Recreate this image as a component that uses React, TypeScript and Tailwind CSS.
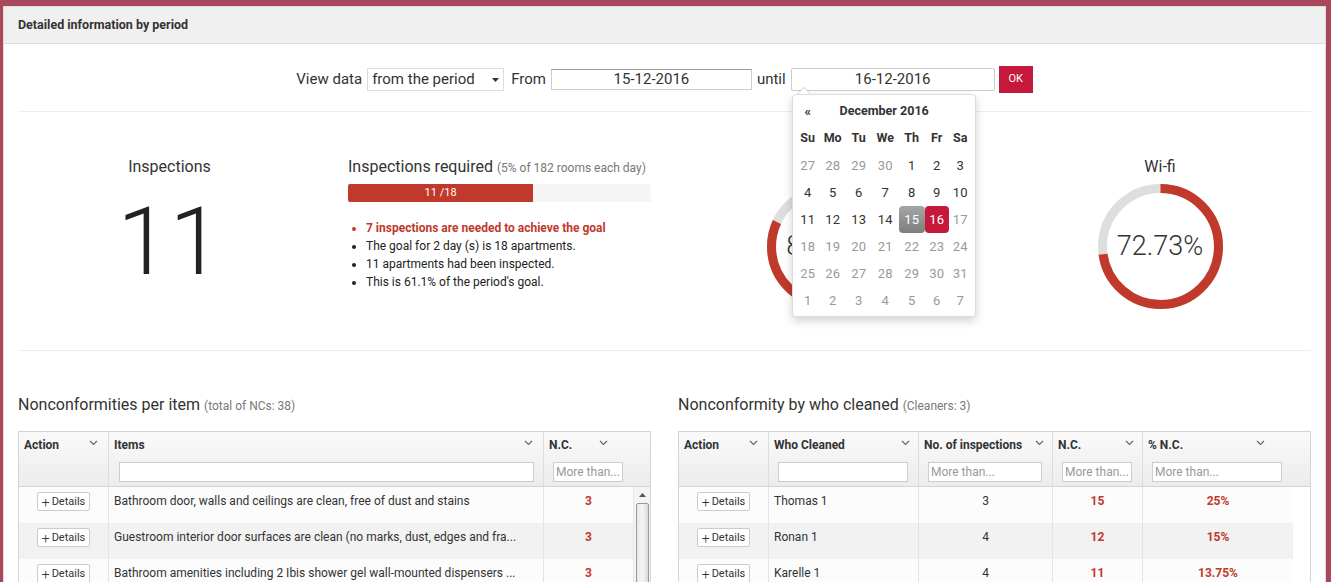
import React from "react"

const RED = "#c0392b"

const Chevron = () => (
  <svg width="9" height="6" viewBox="0 0 9 6" className="shrink-0">
    <path d="M1 1l3.5 3.5L8 1" fill="none" stroke="#666" strokeWidth="1.2" />
  </svg>
)

const Donut = ({ pct, label }: { pct: number; label: string }) => {
  const r = 58
  const c = 2 * Math.PI * r
  return (
    <div className="relative w-[125px] h-[125px]">
      <svg width="125" height="125" viewBox="0 0 125 125">
        <circle cx="62.5" cy="62.5" r={r} fill="none" stroke="#dedede" strokeWidth="9" />
        <circle
          cx="62.5"
          cy="62.5"
          r={r}
          fill="none"
          stroke={RED}
          strokeWidth="9"
          strokeDasharray={`${(c * pct) / 100} ${c}`}
          transform="rotate(-90 62.5 62.5)"
        />
      </svg>
      <div className="absolute inset-0 flex items-center justify-center text-[27px] font-light text-[#333]">
        {label}
      </div>
    </div>
  )
}

const DetailsButton = () => (
  <button className="h-[19px] w-[53px] bg-white border border-[#ccc] rounded-[2px] text-[11px] text-[#333] flex items-center justify-center gap-[2px] leading-none">
    <span className="text-[14px] font-light">+</span>Details
  </button>
)

const FilterInput = ({ placeholder, w }: { placeholder?: string; w: string }) => (
  <div
    className={`${w} h-[20px] bg-white border border-[#ccc] text-[12px] text-[#999] px-[2px] flex items-center overflow-hidden whitespace-nowrap`}
  >
    {placeholder}
  </div>
)

const items = [
  "Bathroom door, walls and ceilings are clean, free of dust and stains",
  "Guestroom interior door surfaces are clean (no marks, dust, edges and fra...",
  "Bathroom amenities including 2 Ibis shower gel wall-mounted dispensers ...",
]

const cleaners = [
  { name: "Thomas 1", insp: 3, nc: 15, pct: "25%" },
  { name: "Ronan 1", insp: 4, nc: 12, pct: "15%" },
  { name: "Karelle 1", insp: 4, nc: 11, pct: "13.75%" },
]

const calRows = [
  [27, 28, 29, 30, 1, 2, 3],
  [4, 5, 6, 7, 8, 9, 10],
  [11, 12, 13, 14, 15, 16, 17],
  [18, 19, 20, 21, 22, 23, 24],
  [25, 26, 27, 28, 29, 30, 31],
  [1, 2, 3, 4, 5, 6, 7],
]

const Calendar = () => (
  <div className="absolute left-[1px] top-[26px] z-10">
    {/* arrow */}
    <div className="absolute left-[5px] top-[-7px] w-0 h-0 border-x-[7px] border-x-transparent border-b-[7px] border-b-[#ccc]" />
    <div className="absolute left-[6px] top-[-6px] w-0 h-0 border-x-[6px] border-x-transparent border-b-[6px] border-b-white" />
    <div className="w-[184px] bg-white border border-[#ddd] rounded-[4px] shadow-[0_4px_10px_rgba(0,0,0,0.18)] pt-[3px] pb-[2px] pl-[3px] pr-[2px] text-[#333]">
      <div className="grid grid-cols-[24px_26px_26px_27px_26px_24px_23px]">
        <div className="h-[27px] flex items-center justify-center text-[13px] font-bold">«</div>
        <div className="col-span-5 h-[27px] flex items-center justify-center text-[12.5px] font-bold">December 2016</div>
        <div />
        {["Su", "Mo", "Tu", "We", "Th", "Fr", "Sa"].map((d) => (
          <div key={d} className="h-[27px] flex items-center justify-center text-[12.5px] font-bold">
            {d}
          </div>
        ))}
        {calRows.map((row, ri) =>
          row.map((d, ci) => {
            const muted = ri === 0 ? ci < 4 : ri >= 3 || (ri === 2 && ci === 6)
            const sel15 = ri === 2 && ci === 4
            const sel16 = ri === 2 && ci === 5
            let cls = "text-[#333]"
            if (muted) cls = "text-[#999]"
            if (sel15) cls = "text-white bg-gradient-to-b from-[#a6a6a6] to-[#7e7e7e] rounded-[4px]"
            if (sel16) cls = "text-white bg-[#c5183a] rounded-[4px]"
            return (
              <div key={`${ri}-${ci}`} className={`h-[27px] flex items-center justify-center text-[13px] ${cls}`}>
                {d}
              </div>
            )
          })
        )}
      </div>
    </div>
  </div>
)

export default function App() {
  return (
    <div className="w-[1331px] h-[582px] overflow-hidden bg-[#a9485a] pl-[3px] pr-[5px] pt-[6px] font-['Roboto',sans-serif] text-[#333]">
      <div className="bg-white border border-[#dcdcdc] h-[600px]">
        {/* Panel header */}
        <div className="h-[37px] bg-[#f0f0f0] border-b border-[#dcdcdc] px-[14px] flex items-center text-[12.5px] font-bold text-[#333]">
          Detailed information by period
        </div>

        <div className="px-[14px]">
          {/* Filter row */}
          <div className="mt-[22px] flex items-center justify-center text-[15px]">
            <span>View data</span>
            <div className="ml-[5px] w-[137px] h-[23px] border border-[#ddd] bg-white flex items-center justify-between px-[4px]">
              <span>from the period</span>
              <svg width="7" height="4" viewBox="0 0 7 4">
                <path d="M0 0h7L3.5 4z" fill="#333" />
              </svg>
            </div>
            <span className="ml-[7px]">From</span>
            <div className="ml-[5px] w-[201px] h-[21px] border border-[#ccc] border-t-[#999] bg-white flex items-center justify-center">
              15-12-2016
            </div>
            <span className="ml-[5px]">until</span>
            <div className="relative ml-[5px]">
              <div className="w-[204px] h-[23px] border border-[#ccc] rounded-[2px] bg-white flex items-center justify-center">
                16-12-2016
              </div>
              <Calendar />
            </div>
            <button className="ml-[4px] w-[34px] h-[27px] bg-[#c5183a] text-white text-[11px] flex items-center justify-center">
              OK
            </button>
          </div>

          <div className="mt-[18px] border-t border-[#eee]" />

          {/* Stats */}
          <div className="flex h-[238px] pt-[44px]">
            <div className="w-[303px] flex flex-col items-center">
              <div className="text-[16px] leading-[22px]">Inspections</div>
              <div className="mt-[17px] text-[94px] leading-none font-light text-[#222]">11</div>
            </div>

            <div className="ml-[27px] w-[303px]">
              <div className="leading-[22px] whitespace-nowrap">
                <span className="text-[16px]">Inspections required</span>{" "}
                <span className="text-[12px] text-[#777]">(5% of 182 rooms each day)</span>
              </div>
              <div className="mt-[5px] h-[18px] bg-[#f5f5f5] rounded-[2px] overflow-hidden">
                <div className="h-full bg-[#c0392b] text-white text-[11px] flex items-center justify-center" style={{ width: "61.1%" }}>
                  11 /18
                </div>
              </div>
              <ul className="mt-[17px] list-disc pl-[18px] text-[12px] leading-[18px] text-[#222]">
                <li className="text-[#c0392b] font-bold marker:text-[#c0392b]">7 inspections are needed to achieve the goal</li>
                <li>The goal for 2 day (s) is 18 apartments.</li>
                <li>11 apartments had been inspected.</li>
                <li>This is 61.1% of the period's goal.</li>
              </ul>
            </div>

            <div className="ml-[13px] w-[331px] flex flex-col items-center">
              <div className="text-[16px] leading-[22px]">Rooms</div>
              <div className="mt-[6px]">
                <Donut pct={81.82} label="81.82%" />
              </div>
            </div>

            <div className="flex-1 mr-[-14px] flex flex-col items-center">
              <div className="text-[16px] leading-[22px]">Wi-fi</div>
              <div className="mt-[6px]">
                <Donut pct={72.73} label="72.73%" />
              </div>
            </div>
          </div>

          <div className="border-t border-[#eee]" />

          {/* Tables */}
          <div className="mt-[43px] flex gap-[27px]">
            {/* Left table */}
            <div className="w-[633px]">
              <div className="h-[22px] leading-[22px] whitespace-nowrap">
                <span className="text-[16px]">Nonconformities per item</span>{" "}
                <span className="text-[12px] text-[#777]">(total of NCs: 38)</span>
              </div>
              <div className="mt-[15px] border border-[#d4d4d4]">
                <div className="grid grid-cols-[90px_435px_1fr] h-[55px] bg-gradient-to-b from-[#fafafa] to-[#ececec] border-b border-[#d4d4d4] text-[12px] font-bold">
                  <div className="border-r border-[#ddd] px-[5px] pt-[4px] flex justify-between items-start">
                    <span>Action</span>
                    <span className="mt-[4px] mr-[5px]"><Chevron /></span>
                  </div>
                  <div className="border-r border-[#ddd] px-[5px] pt-[4px]">
                    <div className="flex justify-between items-start">
                      <span>Items</span>
                      <span className="mt-[4px] mr-[5px]"><Chevron /></span>
                    </div>
                    <div className="mt-[8px] pl-[5px]">
                      <FilterInput w="w-[415px]" />
                    </div>
                  </div>
                  <div className="px-[5px] pt-[4px]">
                    <div className="flex items-start gap-[27px]">
                      <span>N.C.</span>
                      <span className="mt-[4px]"><Chevron /></span>
                    </div>
                    <div className="mt-[8px] pl-[4px] font-normal">
                      <FilterInput w="w-[70px]" placeholder="More than..." />
                    </div>
                  </div>
                </div>
                <div className="flex h-[120px]">
                  <div className="w-[616px]">
                    {items.map((t, i) => (
                      <div key={i} className={`grid grid-cols-[90px_435px_1fr] h-[36px] text-[12px] ${i % 2 ? "bg-[#f2f2f2]" : "bg-[#fcfcfc]"}`}>
                        <div className="border-r border-[#e4e4e4] flex justify-center pt-[5px]">
                          <DetailsButton />
                        </div>
                        <div className="border-r border-[#e4e4e4] px-[5px] pt-[5px] whitespace-nowrap overflow-hidden">{t}</div>
                        <div className="text-center pt-[5px] font-bold text-[#c0392b]">3</div>
                      </div>
                    ))}
                  </div>
                  <div className="w-[17px] bg-[#f4f4f4] border-l border-[#e6e6e6] flex flex-col items-center">
                    <svg width="7" height="4" viewBox="0 0 7 4" className="mt-[6px]">
                      <path d="M0 4h7L3.5 0z" fill="#555" />
                    </svg>
                    <div className="mt-[6px] w-[13px] flex-1 rounded-[2px] border border-[#9a9a9a] bg-gradient-to-r from-[#e8e8e8] via-[#f6f6f6] to-[#dadada]" />
                  </div>
                </div>
              </div>
            </div>

            {/* Right table */}
            <div className="w-[633px]">
              <div className="h-[22px] leading-[22px] whitespace-nowrap">
                <span className="text-[16px]">Nonconformity by who cleaned</span>{" "}
                <span className="text-[12px] text-[#777]">(Cleaners: 3)</span>
              </div>
              <div className="mt-[15px] border border-[#d4d4d4]">
                <div className="grid grid-cols-[90px_150px_134px_90px_1fr] h-[55px] bg-gradient-to-b from-[#fafafa] to-[#ececec] border-b border-[#d4d4d4] text-[12px] font-bold">
                  <div className="border-r border-[#ddd] px-[5px] pt-[4px] flex justify-between items-start">
                    <span>Action</span>
                    <span className="mt-[4px] mr-[5px]"><Chevron /></span>
                  </div>
                  {[
                    { t: "Who Cleaned", ph: "", w: "w-[130px]" },
                    { t: "No. of inspections", ph: "More than...", w: "w-[114px]" },
                    { t: "N.C.", ph: "More than...", w: "w-[70px]" },
                    { t: "% N.C.", ph: "More than...", w: "w-[130px]" },
                  ].map((c, i) => (
                    <div key={c.t} className={`px-[5px] pt-[4px] ${i < 3 ? "border-r border-[#ddd]" : ""}`}>
                      <div className={`flex items-start ${i === 3 ? "w-[120px]" : ""} justify-between`}>
                        <span className="whitespace-nowrap">{c.t}</span>
                        <span className="mt-[4px] mr-[3px]"><Chevron /></span>
                      </div>
                      <div className="mt-[8px] pl-[4px] font-normal">
                        <FilterInput w={c.w} placeholder={c.ph} />
                      </div>
                    </div>
                  ))}
                </div>
                <div className="h-[120px] bg-white">
                  {cleaners.map((c, i) => (
                    <div
                      key={c.name}
                      className={`w-[614px] grid grid-cols-[90px_150px_134px_90px_1fr] h-[36px] text-[12px] ${i % 2 ? "bg-[#f2f2f2]" : "bg-[#fcfcfc]"}`}
                    >
                      <div className="border-r border-[#e4e4e4] flex justify-center pt-[5px]">
                        <DetailsButton />
                      </div>
                      <div className="border-r border-[#e4e4e4] px-[5px] pt-[5px]">{c.name}</div>
                      <div className="border-r border-[#e4e4e4] text-center pt-[5px]">{c.insp}</div>
                      <div className="border-r border-[#e4e4e4] text-center pt-[5px] font-bold text-[#c0392b]">{c.nc}</div>
                      <div className="text-center pt-[5px] font-bold text-[#c0392b]">{c.pct}</div>
                    </div>
                  ))}
                </div>
              </div>
            </div>
          </div>
        </div>
      </div>
    </div>
  )
}
